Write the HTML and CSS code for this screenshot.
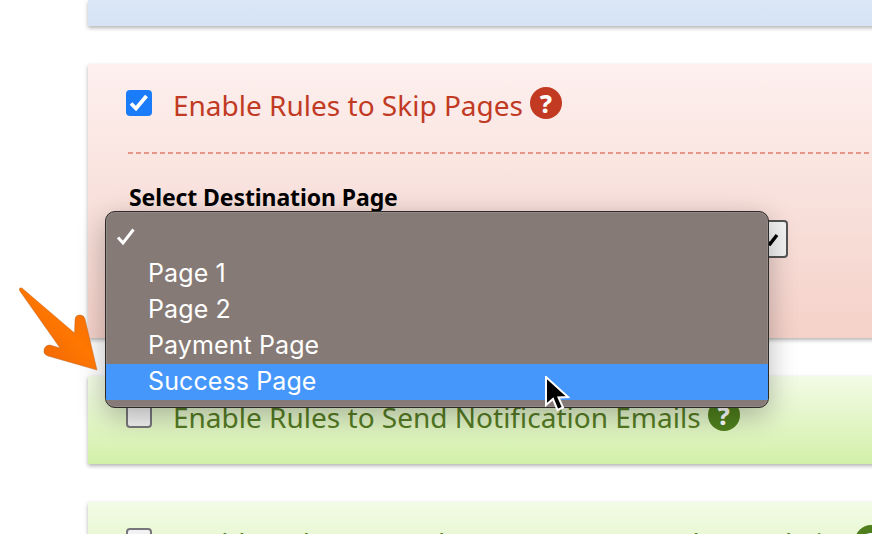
FILE: index.html
```html
<!DOCTYPE html>
<html lang="en">
<head>
<meta charset="utf-8">
<title>Rules</title>
<link rel="stylesheet" href="styles.css">
</head>
<body>
<main class="page">
  <section class="card card-blue"></section>
  <section class="card card-red">
    <div class="title-row">
      <span class="check check-on">
        <svg viewBox="0 0 26 26" width="26" height="26"><path d="M5 13.500 L10 18.500 L20.500 6" fill="none" stroke="#fff" stroke-width="3.800"/></svg>
      </span>
      <h2 class="title title-red">Enable Rules to Skip Pages</h2>
      <span class="help help-red">?</span>
    </div>
    <hr class="rule">
    <div class="field-label">Select Destination Page</div>
    <div class="select-box">
      <svg class="select-mark" viewBox="0 0 14 14" width="14" height="14"><path d="M2 10 L5 12 L12 3" fill="none" stroke="#000" stroke-width="3.400"/></svg>
    </div>
  </section>
  <section class="card card-green">
    <div class="title-row">
      <span class="check"></span>
      <h2 class="title title-green">Enable Rules to Send Notification Emails</h2>
      <span class="help help-green">?</span>
    </div>
  </section>
  <section class="card card-green card-last">
    <div class="title-row">
      <span class="check"></span>
      <h2 class="title title-green title-tight">Enable Rules to Send Form Data to Another Website</h2>
      <span class="help help-green">?</span>
    </div>
  </section>
</main>

<div class="menu">
  <div class="menu-item menu-checked">
    <svg class="menu-tick" viewBox="0 0 20 18" width="20" height="18"><path d="M2 9.500 L7 15 L17.500 1.500" fill="none" stroke="#fff" stroke-width="3"/></svg>
  </div>
  <div class="menu-item">Page 1</div>
  <div class="menu-item">Page 2</div>
  <div class="menu-item">Payment Page</div>
  <div class="menu-item menu-active">Success Page</div>
</div>

<svg class="arrow" viewBox="0 0 90 90" width="90" height="90">
  <defs>
    <linearGradient id="arrowFill" x1="0" y1="1" x2="1" y2="0">
      <stop offset="0" stop-color="#e85f08"/>
      <stop offset="0.55" stop-color="#ff7700"/>
      <stop offset="1" stop-color="#ee6a08"/>
    </linearGradient>
  </defs>
  <path d="M1.500 2.500 Q3 1 4.500 2.500 L56.500 47 L57 34 Q57 29 62 29 Q66 29 67 33 L79 84 L30 70 Q25 68 26 64 Q27 59 32 59 L42 62 L1.500 4.500 Z" fill="url(#arrowFill)" stroke="#a85a20" stroke-width="0.400"/>
</svg>

<svg class="cursor" viewBox="0 0 26 38" width="26" height="38">
  <path d="M2 1 L2 29 L9 23 L13.500 34 L19 31.500 L14.500 21.500 L24 21 Z" fill="#000" stroke="#fff" stroke-width="2"/>
</svg>
</body>
</html>
```
FILE: styles.css
```css
* { box-sizing: border-box; }
html, body { margin: 0; padding: 0; }
body {
  position: relative;
  width: 872px;
  height: 534px;
  overflow: hidden;
  background: #fff;
  font-family: "Noto Sans", "Open Sans", sans-serif;
}
.page {
  display: flex;
  flex-direction: column;
  gap: 38px;
  height: 534px;
  overflow: hidden;
  padding-left: 88px;
  width: 872px;
}
.card {
  flex: none;
  width: 860px;
  padding: 23px 0 0 38px;
  box-shadow: 0 2px 4px rgba(0, 0, 0, .3);
}
.card-blue {
  height: 26px;
  padding: 0;
  background: linear-gradient(#dbe7f6, #d5e3f5);
}
.card-red {
  height: 274px;
  background: linear-gradient(#fdf0ee, #f4d1c9);
}
.card-green {
  height: 88px;
  background: linear-gradient(#f2fbe6, #d3f0a9);
}
.card-last { height: 120px; }
.title-row {
  display: flex;
  align-items: center;
  height: 32px;
}
.check {
  flex: none;
  width: 26px;
  height: 26px;
  border: 2px solid #77767b;
  border-radius: 4px;
  background: #f2f2f2;
}
.check-on {
  border: 0;
  background: #1a7cf8;
}
.check-on svg { display: block; }
.title {
  margin: 4px 7px 0 21px;
  font-size: 28px;
  font-weight: 400;
  line-height: 32px;
  white-space: nowrap;
}
.title-red { color: #c13a24; }
.title-green { color: #557c24; }
.title-tight { letter-spacing: -.12px; }
.help {
  flex: none;
  width: 32px;
  height: 32px;
  border-radius: 50%;
  color: #fff;
  font: 800 25px/32px "Noto Sans", sans-serif;
  text-align: center;
}
.help-red { background: #c13a21; }
.help-green { background: #4f7f1c; }
.rule {
  height: 2px;
  margin: 33px 0 0 2px;
  border: 0;
  background: repeating-linear-gradient(90deg, #e6958a 0 5px, transparent 5px 8px);
}
.field-label {
  margin: 28px 0 0 3px;
  font-size: 23px;
  font-weight: 700;
  line-height: 30px;
  letter-spacing: -.1px;
  color: #000;
}
.select-box {
  display: flex;
  justify-content: flex-end;
  align-items: center;
  width: 662px;
  height: 38px;
  margin-top: 8px;
  padding-right: 7px;
  border: 2px solid #555;
  border-radius: 4px;
  background: #f3f3f3;
}
.menu {
  position: absolute;
  left: 105px;
  top: 211px;
  width: 664px;
  height: 197px;
  padding-top: 8px;
  border: 1px solid #2e2a28;
  border-radius: 10px;
  overflow: hidden;
  background: #857a76;
  box-shadow: 0 8px 28px rgba(0, 0, 0, .28), inset 0 0 0 1px rgba(255, 255, 255, .12);
}
.menu-item {
  position: relative;
  height: 36px;
  padding-left: 42px;
  font: 400 25px/34px "Inter", sans-serif;
  letter-spacing: .1px;
  color: #fff;
}
.menu-active { background: #4697fb; }
.menu-tick {
  position: absolute;
  left: 10px;
  top: 8px;
}
.arrow {
  position: absolute;
  left: 18px;
  top: 286px;
}
.cursor {
  position: absolute;
  left: 544px;
  top: 376px;
}
```
